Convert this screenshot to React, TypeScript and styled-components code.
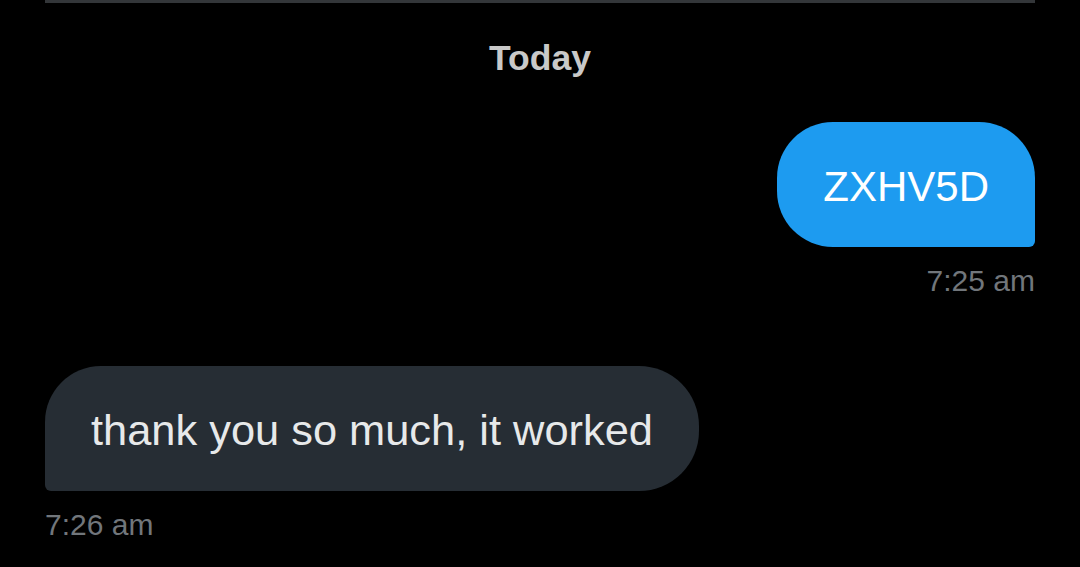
import React from 'react';
import styled, { createGlobalStyle } from 'styled-components';

const GlobalStyle = createGlobalStyle`
  html, body {
    margin: 0;
    padding: 0;
    background: #000000;
  }
  body {
    font-family: "Liberation Sans", Arial, sans-serif;
  }
`

const Screen = styled.div`
  width: 1080px;
  height: 567px;
  overflow: hidden;
  background: #000000;
  display: flex;
  flex-direction: column;
`

const Divider = styled.div`
  height: 3px;
  margin: 0 45px;
  background: #333639;
`

const DayLabel = styled.div`
  margin-top: 34px;
  text-align: center;
  font-size: 35.5px;
  line-height: 42px;
  font-weight: 700;
  color: #c9c9c9;
`

const Row = styled.div<{ $mine?: boolean; $gap: number }>`
  display: flex;
  flex-direction: column;
  align-items: ${p => (p.$mine ? 'flex-end' : 'flex-start')};
  margin-top: ${p => p.$gap}px;
  padding: 0 45px;
`

const Bubble = styled.div<{ $mine?: boolean }>`
  display: flex;
  align-items: center;
  box-sizing: border-box;
  height: 125px;
  padding: 4px 46px 0 46px;
  font-size: ${p => (p.$mine ? 42 : 43.4)}px;
  color: ${p => (p.$mine ? '#ffffff' : '#e7e9ea')};
  background: ${p => (p.$mine ? '#1d9bf0' : '#262d34')};
  border-radius: ${p => (p.$mine ? '56px 56px 6px 56px' : '56px 60px 60px 6px')};
`

const Time = styled.div`
  margin-top: 16px;
  font-size: 30px;
  line-height: 36px;
  color: #71767b;
`

export default function App() {
  return (
    <>
      <GlobalStyle />
      <Screen>
        <Divider />
        <DayLabel>Today</DayLabel>
        <Row $mine $gap={43}>
          <Bubble $mine>ZXHV5D</Bubble>
          <Time>7:25 am</Time>
        </Row>
        <Row $gap={67}>
          <Bubble>thank you so much, it worked</Bubble>
          <Time>7:26 am</Time>
        </Row>
      </Screen>
    </>
  )
}
